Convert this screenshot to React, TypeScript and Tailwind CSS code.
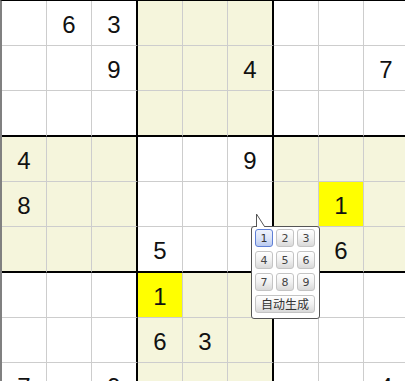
import React from "react";

const givens: Record<string, string> = {
  "0-1": "6",
  "0-2": "3",
  "1-2": "9",
  "1-5": "4",
  "1-8": "7",
  "3-0": "4",
  "3-5": "9",
  "4-0": "8",
  "4-7": "1",
  "5-3": "5",
  "5-7": "6",
  "6-3": "1",
  "7-3": "6",
  "7-4": "3",
  "8-0": "7",
  "8-2": "9",
  "8-8": "4",
};

const yellow = new Set(["4-7", "6-3"]);

function shaded(r: number, c: number) {
  const br = Math.floor(r / 3);
  const bc = Math.floor(c / 3);
  return (br + bc) % 2 === 1;
}

function Cell({ r, c }: { r: number; c: number }) {
  const key = `${r}-${c}`;
  const v = givens[key];
  const thickR = c % 3 === 2;
  const thickB = r % 3 === 2;
  const bg = yellow.has(key)
    ? "bg-[#ffff00]"
    : shaded(r, c)
    ? "bg-[#f5f5dc]"
    : "bg-white";
  return (
    <div
      className={[
        "box-border flex items-center justify-center pt-1 text-[24px] leading-none text-[#111]",
        bg,
        thickR ? "border-r-2 border-r-black" : "border-r border-r-[#cdcdcd]",
        thickB ? "border-b-2 border-b-black" : "border-b border-b-[#cdcdcd]",
      ].join(" ")}
      style={{ fontFamily: '"Liberation Sans", Arial, sans-serif' }}
    >
      {v ?? ""}
    </div>
  );
}

function NumBtn({ n, active }: { n: number; active?: boolean }) {
  return (
    <div
      className={
        active
          ? "box-border flex h-[18px] w-[18px] items-center justify-center rounded-[3px] border border-[#5f7fd6] bg-gradient-to-b from-[#eef2fc] via-[#dbe4f8] to-[#b9c9ef] text-[11px] leading-none text-[#333]"
          : "box-border flex h-[18px] w-[18px] items-center justify-center rounded-[3px] border border-[#c4c4c4] bg-gradient-to-b from-white via-[#f1f1f1] to-[#d9d9d9] text-[11px] leading-none text-[#444]"
      }
      style={{ fontFamily: '"DejaVu Sans", "Liberation Sans", sans-serif' }}
    >
      {n}
    </div>
  );
}

export default function App() {
  const cells = [];
  for (let r = 0; r < 9; r++) {
    for (let c = 0; c < 9; c++) {
      cells.push(<Cell key={`${r}-${c}`} r={r} c={c} />);
    }
  }
  return (
    <div className="relative h-[381px] w-[405px] overflow-hidden bg-white">
      <div className="grid w-max grid-cols-[45px_45px_46px_45px_45px_46px_45px_45px_46px] grid-rows-[45px_45px_46px_45px_45px_46px_45px_45px_46px] border-l-2 border-t border-l-[#808080] border-t-black">
        {cells}
      </div>

      {/* popup */}
      <div className="absolute left-[251px] top-[226px] box-border flex h-[93px] w-[69px] flex-col gap-[4px] rounded-[3px] border border-[#555] bg-white pb-[3px] pl-[3px] pr-[3px] pt-[2px]">
        <div className="grid grid-cols-[18px_18px_18px] gap-x-[3px] gap-y-[4px]">
          {[1, 2, 3, 4, 5, 6, 7, 8, 9].map((n) => (
            <NumBtn key={n} n={n} active={n === 1} />
          ))}
        </div>
        <div
          className="box-border flex h-[18px] w-[60px] items-center justify-center rounded-[3px] border border-[#c4c4c4] bg-gradient-to-b from-white via-[#f1f1f1] to-[#d9d9d9] text-[12px] leading-none text-[#333]"
          style={{ fontFamily: '"Noto Sans CJK SC", "Noto Sans", sans-serif' }}
        >
          自动生成
        </div>
      </div>
      <svg
        className="absolute left-[255px] top-[213px]"
        width="12"
        height="15"
        viewBox="0 0 12 15"
      >
        <polygon points="1.5,1 1.5,14 9.5,14" fill="white" />
        <polyline
          points="1.5,14 1.5,1 9.5,13.5"
          fill="none"
          stroke="#555"
          strokeWidth="1"
        />
      </svg>
    </div>
  );
}
